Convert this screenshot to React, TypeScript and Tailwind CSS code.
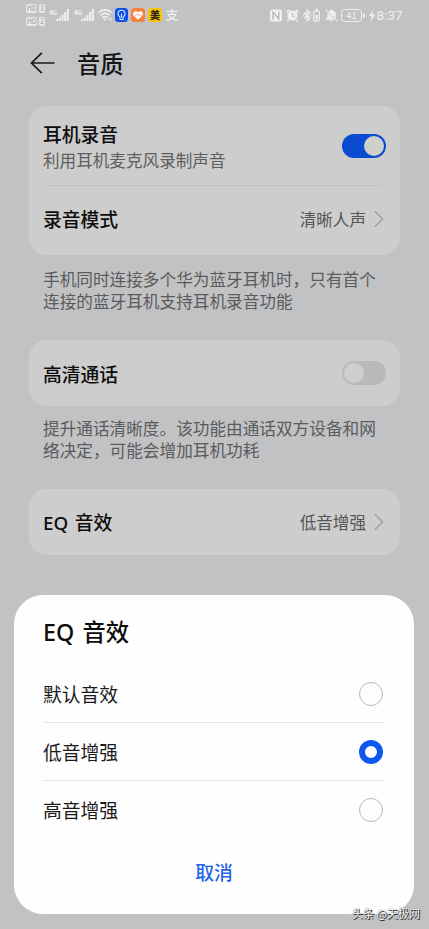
import { useState } from "react";
import clsx from "clsx";

const HdBadge: React.FC<{ sim: string }> = ({ sim }) => (
  <div className="flex gap-[2px] text-[7px] leading-[9px] font-bold text-[#b4b5b7]">
    <span className="w-[11px] h-[9px] rounded-[2px] bg-[#e9e9ea] text-center tracking-tighter">HD</span>
    <span className="w-[6px] h-[9px] rounded-[2px] bg-[#e9e9ea] text-center">{sim}</span>
  </div>
);

const Signal = () => (
  <div className="flex items-start w-[20px] h-[14px]">
    <span className="w-[7px] text-[6.5px] leading-[8px] font-bold tracking-tighter">4G</span>
    <svg width="13" height="14" viewBox="0 0 13 14" fill="currentColor">
      <rect x="0.1" y="11" width="2" height="2" />
      <rect x="2.8" y="9.2" width="2" height="3.8" />
      <rect x="5.5" y="6.8" width="2" height="6.2" />
      <rect x="8.2" y="4" width="2" height="9" />
      <rect x="10.9" y="1" width="2" height="12" />
    </svg>
  </div>
);

const StatusBar = () => (
  <div className="flex items-center h-[30px] pl-[26px] text-[#f0f0f1]">
    <div className="flex flex-col gap-[4.5px]">
      <HdBadge sim="1" />
      <HdBadge sim="2" />
    </div>
    <div className="flex ml-[4px] gap-[5px]">
      <Signal />
      <Signal />
    </div>
    <svg className="ml-[4px]" width="15" height="14" viewBox="0 0 15 14" fill="none" stroke="currentColor" strokeWidth="1.7">
      <path d="M0.6 4.6C4.4 1 9.6 1 13.4 4.6" />
      <path d="M2.6 7.2C5.2 4.8 8.8 4.8 11.4 7.2" />
      <path d="M4.5 9.6C6 8.3 8 8.3 9.5 9.6" />
      <path d="M5.4 10.8L7 12.8L8.6 10.8Z" fill="currentColor" stroke="none" />
      <path d="M11 9.5V12.5M13.2 9.8V12.8" strokeWidth="1" />
    </svg>
    <svg className="ml-[2px]" width="13" height="14" viewBox="0 0 13 14">
      <rect width="13" height="14" rx="3.5" fill="#0b50ea" />
      <path
        d="M5 9.2C3.5 8 3 7 3 5.8C3 3.7 4.6 2.3 6.5 2.3S10 3.7 10 5.8C10 7 9.5 8 8 9.2V11.5H5Z"
        fill="none"
        stroke="#dce7fb"
        strokeWidth="1.1"
      />
      <path d="M6.5 5.5V9.5" stroke="#dce7fb" strokeWidth="1.1" />
    </svg>
    <svg className="ml-[3px]" width="14" height="14" viewBox="0 0 14 14">
      <rect width="14" height="14" rx="3.5" fill="#f5803f" />
      <path d="M7 11.8L2.6 7.4C0.8 5.3 3.8 1.5 7 4.3C10.2 1.5 13.2 5.3 11.4 7.4Z" fill="#fff" />
      <path d="M3.5 6.9H5.6L6.6 5.6L7.7 8L8.7 6.8H10.5" fill="none" stroke="#f5a880" strokeWidth="0.8" />
    </svg>
    <span className="ml-[3px] size-[14px] rounded-[3px] bg-[#f4c50c] text-[10px] leading-[14px] font-black text-center text-[#2a2410]">
      美
    </span>
    <span className="ml-[3px] w-[14px] text-[12.5px] leading-[14px] font-medium text-center">支</span>

    <svg className="ml-[91px]" width="12" height="13" viewBox="0 0 12 13">
      <rect y="0.5" width="12" height="12" rx="2.5" fill="currentColor" />
      <path d="M3 10.8V3.2L8.8 10V2.4" fill="none" stroke="#b3b4b6" strokeWidth="1.3" />
    </svg>
    <svg className="ml-[4px]" width="13" height="13" viewBox="0 0 13 13" fill="none">
      <circle cx="6.5" cy="6.7" r="5.1" fill="currentColor" />
      <path d="M0.8 3.2L3.2 0.9M9.8 0.9L12.2 3.2M2.6 11L1.4 12.4M10.4 11L11.6 12.4" stroke="currentColor" strokeWidth="1.7" />
      <path d="M6.4 3.8V7L8.8 8" stroke="#b9babc" strokeWidth="1.1" />
    </svg>
    <svg className="ml-[4px]" width="9" height="13" viewBox="0 0 9 13" fill="none" stroke="currentColor" strokeWidth="1.3">
      <path d="M1 3.5L7 9L4.2 11.8V1.2L7 4L1 9.5" />
      <path d="M0.2 6.5H1.4M7.4 6.5H8.6" />
    </svg>
    <svg className="ml-[1px]" width="7" height="13" viewBox="0 0 7 13" fill="none" stroke="currentColor">
      <rect x="0.7" y="2.2" width="5.6" height="10" rx="1.2" strokeWidth="1.3" />
      <path d="M2 0.8H5" strokeWidth="1.4" />
      <rect x="2.3" y="6" width="2.4" height="4.6" fill="currentColor" stroke="none" />
    </svg>
    <svg className="ml-[5px]" width="13" height="13" viewBox="0 0 13 13" fill="currentColor">
      <path d="M3.6 2.4C5 1.3 5.4 1.6 6 0.6H7C7.4 1.4 10.8 2 10.8 5V9.2Z" />
      <path d="M2.5 3.7L9.6 10.7H1V9.8L2.3 8.4Z" />
      <path d="M5 11.3H8C7.8 12.8 5.2 12.8 5 11.3Z" />
      <path d="M0.8 0.6L12.4 12.2" stroke="currentColor" strokeWidth="1.1" />
    </svg>
    <div className="flex items-center ml-[3px]">
      <span className="w-[21px] h-[13px] rounded-[3.5px] border border-current text-[9.5px] leading-[11px] text-center">41</span>
      <span className="ml-[1px] w-[1.5px] h-[5px] rounded-r bg-current" />
    </div>
    <svg className="ml-[4px]" width="6" height="11" viewBox="0 0 6 11" fill="currentColor">
      <path d="M3.8 0L0 6H2.6L2 11L6 4.6H3.4Z" />
    </svg>
    <span className="ml-[2px] font-['Roboto'] text-[13.6px] leading-[14px]">8:37</span>
  </div>
);

const Chevron = () => (
  <svg className="ml-[8px] mr-[2px]" width="10" height="18" viewBox="0 0 10 18" fill="none" stroke="#a0a0a0" strokeWidth="1.5">
    <path d="M0.8 1.3L8.6 9L0.8 16.7" />
  </svg>
);

const Toggle: React.FC<{ on?: boolean }> = ({ on }) => (
  <span className={clsx("flex items-center w-[44px] h-[24px] px-[2px] rounded-full", on ? "justify-end bg-[#0b4bd0]" : "bg-[#b9b9b9]")}>
    <span className={clsx("size-[20px] rounded-full", on ? "bg-[#d0d0cb]" : "bg-[#cfcfcf]")} />
  </span>
);

// Latin letters in the headings are wider than the CJK face's own
const EqTitle = () => (
  <>
    <span className="mr-[0.09em] font-['Noto_Sans']">EQ </span>音效
  </>
);

const LinkRow: React.FC<{ title: React.ReactNode; value: string }> = ({ title, value }) => (
  <div className="flex items-center h-[66px]">
    <span className="flex-1 text-[18.8px] leading-[28px] font-medium text-[#0d0d0d]">{title}</span>
    <span className="text-[16.6px] text-[#565656]">{value}</span>
    <Chevron />
  </div>
);

const cardClass = "rounded-[18px] bg-[#cdcdcd] pl-[14px] pr-[14px]";
const noteClass = "ml-[14px] text-[16.65px] leading-[21.5px] whitespace-nowrap text-[#5a5b5c]";

const options = ["默认音效", "低音增强", "高音增强"];

const App: React.FC = () => {
  const [selected, setSelected] = useState("低音增强");

  return (
    <div className="relative w-[429px] h-[929px] overflow-hidden bg-[#c1c2c4] font-['Noto_Sans_CJK_SC',sans-serif]">
      <StatusBar />

      <header className="flex items-center h-[66px] pl-[30px]">
        <svg width="25" height="22" viewBox="0 0 25 22" fill="none" stroke="#1b1b1c" strokeWidth="1.7">
          <path d="M24.5 11H1.5M11.8 0.8L1.5 11L11.8 21.2" />
        </svg>
        <h1 className="ml-[22px] text-[23.3px] leading-[34px] font-medium text-[#161617]">音质</h1>
      </header>

      <main className="pl-[29px] pr-[29px] pt-[10px]">
        <section className={clsx(cardClass, "h-[149px]")}>
          <div className="flex items-center h-[79px]">
            <div className="flex-1 pt-[2px]">
              <p className="text-[18.8px] leading-[27px] font-medium text-[#0d0d0d]">耳机录音</p>
              <p className="text-[16.6px] leading-[26px] text-[#5e5e5e]">利用耳机麦克风录制声音</p>
            </div>
            <Toggle on />
          </div>
          <div className="h-px ml-[4px] mr-[5px] bg-[#bfbfbf]" />
          <LinkRow title="录音模式" value="清晰人声" />
        </section>
        <p className={clsx(noteClass, "mt-[14px]")}>
          手机同时连接多个华为蓝牙耳机时，只有首个
          <br />
          连接的蓝牙耳机支持耳机录音功能
        </p>

        <section className={clsx(cardClass, "flex items-center justify-between h-[66px] mt-[28px]")}>
          <span className="pt-[2px] text-[18.8px] font-medium text-[#0d0d0d]">高清通话</span>
          <Toggle />
        </section>
        <p className={clsx(noteClass, "mt-[12px]")}>
          提升通话清晰度。该功能由通话双方设备和网
          <br />
          络决定，可能会增加耳机功耗
        </p>

        <section className={clsx(cardClass, "h-[66px] mt-[28px]")}>
          <LinkRow title={<EqTitle />} value="低音增强" />
        </section>
      </main>

      <div className="absolute left-[14px] top-[595px] w-[400px] h-[319px] rounded-[29px] bg-[#fefefe] px-[29px]">
        <h2 className="h-[53px] pt-[19px] text-[23.3px] leading-[34px] font-medium text-[#0d0d0d]">
          <EqTitle />
        </h2>
        <ul className="mt-[17px] divide-y divide-[#e8e8e8]">
          {options.map((name) => (
            <li key={name}>
              <button className="flex items-center justify-between w-full h-[57px] pr-[2px]" onClick={() => setSelected(name)}>
                <span className="pt-[2px] text-[18.8px] text-[#1a1a1a]">{name}</span>
                <span
                  className={clsx(
                    "size-[24px] rounded-full",
                    selected === name ? "border-[6px] border-[#0c58ee]" : "border-[1.5px] border-[#b8b8b8]"
                  )}
                />
              </button>
            </li>
          ))}
        </ul>
        <button className="block mx-auto mt-[20px] text-[18.8px] leading-[28px] font-medium text-[#2464e6]">取消</button>
      </div>

      <p className="absolute left-[352px] top-[905px] text-[11px] leading-[16px] whitespace-nowrap text-white [text-shadow:1px_1px_0_#222,0_0_1px_#333]">
        头条 @天极网
      </p>
    </div>
  );
};

export default App;
